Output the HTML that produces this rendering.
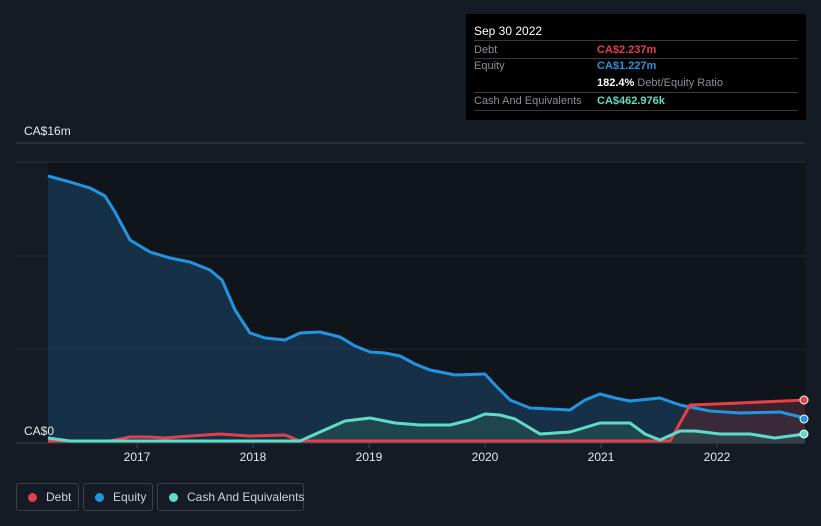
<!DOCTYPE html><html><head><style>
body{margin:0;background:#151b25;width:821px;height:526px;overflow:hidden;font-family:"Liberation Sans",sans-serif;position:relative}
.tt{position:absolute;left:466px;top:14px;width:340px;height:106px;background:#000;}
.r{position:absolute;left:8px;width:324px;font-size:11px;color:#8b8f96}
.leg{position:absolute;top:483px;height:28px;border:1px solid #3a3f48;border-radius:3px;color:#cfd2d6;font-size:12px;line-height:26px;box-sizing:border-box;white-space:nowrap}
.leg i{display:inline-block;width:9px;height:9px;border-radius:50%;margin:0 9px 0 11px;vertical-align:-1px}
</style></head><body>
<svg width="821" height="526" style="position:absolute;left:0;top:0">
<rect x="48" y="162" width="757" height="281" fill="#10151c"/>
<line x1="16" y1="143" x2="805" y2="143" stroke="#3a3f48"/>
<line x1="16" y1="162" x2="805" y2="162" stroke="#2a2f38"/>
<line x1="16" y1="256" x2="805" y2="256" stroke="#22272f"/>
<line x1="16" y1="349" x2="805" y2="349" stroke="#22272f"/>
<line x1="16" y1="443" x2="805" y2="443" stroke="#3a3f48"/>
<g stroke="#3a3f48"><line x1="137" y1="443" x2="137" y2="448"/><line x1="253" y1="443" x2="253" y2="448"/><line x1="369" y1="443" x2="369" y2="448"/><line x1="485" y1="443" x2="485" y2="448"/><line x1="601" y1="443" x2="601" y2="448"/><line x1="717" y1="443" x2="717" y2="448"/></g>
<path d="M48,176 L70,182 L90,188 L105,196 L115,212 L130,240 L150,252 L170,258 L190,262 L210,270 L222,280 L235,310 L250,333 L265,338 L285,340 L300,333 L320,332 L340,337 L355,346 L370,352 L385,353 L400,356 L415,364 L430,370 L455,375 L485,374 L495,385 L510,400 L530,408 L570,410 L585,400 L600,394 L615,398 L630,401 L660,398 L680,405 L710,411 L740,413 L780,412 L805,418 L805,443 L48,443Z" fill="#173a55" opacity=".75"/>
<path d="M670,441 L690,405 L740,403 L805,400 L805,443 L670,443Z" fill="#4a2630" opacity=".7"/>
<path d="M48,438 L70,441 L300,441 L320,432 L345,421 L370,418 L395,423 L420,425 L450,425 L470,420 L485,414 L500,415 L515,419 L540,434 L570,432 L600,423 L630,423 L645,434 L660,440 L680,431 L695,431 L720,434 L750,434 L775,438 L805,434 L805,443 L48,443Z" fill="#2a5a58" opacity=".5"/>
<g fill="none" stroke-width="3" stroke-linejoin="round">
<path d="M48,176 L70,182 L90,188 L105,196 L115,212 L130,240 L150,252 L170,258 L190,262 L210,270 L222,280 L235,310 L250,333 L265,338 L285,340 L300,333 L320,332 L340,337 L355,346 L370,352 L385,353 L400,356 L415,364 L430,370 L455,375 L485,374 L495,385 L510,400 L530,408 L570,410 L585,400 L600,394 L615,398 L630,401 L660,398 L680,405 L710,411 L740,413 L780,412 L805,418" stroke="#2394df"/>
<path d="M48,441 L110,441 L130,437 L150,437 L165,438 L190,436 L220,434 L250,436 L285,435 L300,441 L670,441 L690,405 L740,403 L805,400" stroke="#e0424b"/>
<path d="M48,438 L70,441 L300,441 L320,432 L345,421 L370,418 L395,423 L420,425 L450,425 L470,420 L485,414 L500,415 L515,419 L540,434 L570,432 L600,423 L630,423 L645,434 L660,440 L680,431 L695,431 L720,434 L750,434 L775,438 L805,434" stroke="#5fdcc7"/>
</g>
<circle cx="804" cy="400" r="4" fill="#e0424b" stroke="#fff"/>
<circle cx="804" cy="419" r="4" fill="#2394df" stroke="#fff"/>
<circle cx="804" cy="434" r="4" fill="#5fdcc7" stroke="#fff"/>
<g fill="#e6e8ea" font-size="12" font-family="Liberation Sans"><text x="24" y="135">CA$16m</text><text x="24" y="435">CA$0</text>
<g text-anchor="middle"><text x="137" y="461">2017</text><text x="253" y="461">2018</text><text x="369" y="461">2019</text><text x="485" y="461">2020</text><text x="601" y="461">2021</text><text x="717" y="461">2022</text></g></g>
</svg>
<div class="tt">
<div class="r" style="top:10px;color:#fff;font-size:12px">Sep 30 2022</div>
<div class="r" style="top:26px;border-top:1px solid #3a3a3a;padding-top:3px">Debt<span style="position:absolute;left:123px;color:#e84049;font-weight:bold">CA$2.237m</span></div>
<div class="r" style="top:44px;border-top:1px solid #3a3a3a;padding-top:1px">Equity<span style="position:absolute;left:123px;color:#2394df;font-weight:bold">CA$1.227m</span></div>
<div class="r" style="top:63px"><span style="position:absolute;left:123px;white-space:nowrap"><b style="color:#fff">182.4%</b> Debt/Equity Ratio</span></div>
<div class="r" style="top:78px;border-top:1px solid #3a3a3a;padding-top:2px;height:15px;border-bottom:1px solid #3a3a3a">Cash And Equivalents<span style="position:absolute;left:123px;color:#5fdcc7;font-weight:bold">CA$462.976k</span></div>
</div>
<div class="leg" style="left:16px;width:63px"><i style="background:#e0424b"></i>Debt</div>
<div class="leg" style="left:83px;width:70px"><i style="background:#2394df"></i>Equity</div>
<div class="leg" style="left:157px;width:147px"><i style="background:#5fdcc7"></i>Cash And Equivalents</div>
</body></html>
